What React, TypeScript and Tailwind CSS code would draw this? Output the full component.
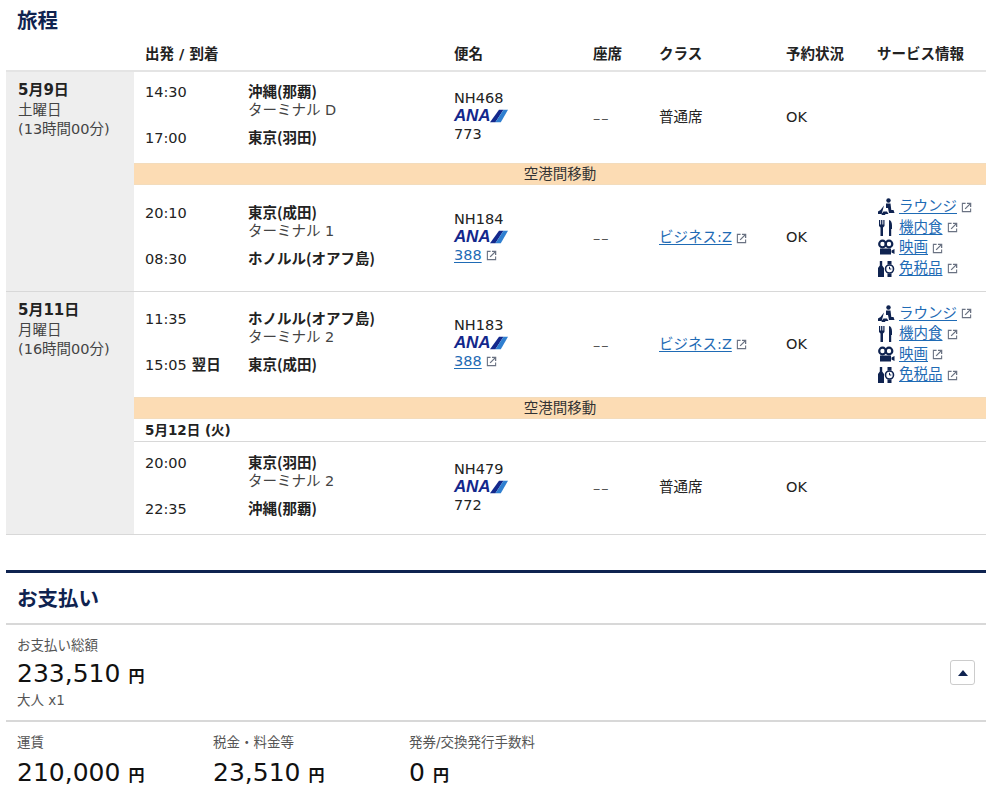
import type { ReactNode } from 'react';

const font = "font-['DejaVu_Sans','Noto_Sans_CJK_JP',sans-serif]";
const place = "-mt-[2px] font-['Noto_Sans_CJK_JP',sans-serif] font-bold";

function ExtIcon({ flush }: { flush?: boolean }) {
  return (
    <svg viewBox="0 0 12 12" className={`${flush ? '' : 'ml-[4px]'} inline-block h-[11px] w-[11px] shrink-0 text-gray-500`} fill="none" stroke="currentColor">
      <path d="M5 1.500H1.500v9h9V7" strokeWidth="1.200" />
      <path d="M4.500 7.500 10 2M6.500 1.500h4v4" strokeWidth="1.400" />
    </svg>
  );
}

function AnaLogo() {
  return (
    <span className="flex h-[18px] w-[54px] items-center">
      <span className="font-['Liberation_Sans',sans-serif] text-[17px] leading-[18px] font-bold tracking-[-0.2px] text-[#13288c] italic">ANA</span>
      <svg viewBox="0 0 20 14" className="h-[14px] w-[18px] shrink-0">
        <polygon points="0,14 10,0 15,0 6,14" fill="#13288c" />
        <polygon points="6,14 15,0 20,0 12,14" fill="#2f7fd0" />
      </svg>
    </span>
  );
}

function LinkText({ children }: { children: ReactNode }) {
  return <span className="text-[#1f6bb5] underline underline-offset-2">{children}</span>;
}

function ServiceIcon({ kind }: { kind: string }) {
  const cls = 'h-[18px] w-[18px] shrink-0 text-[#0f2350]';
  if (kind === 'lounge') {
    return (
      <svg viewBox="0 0 18 18" className={cls} fill="currentColor">
        <circle cx="11.500" cy="2.500" r="2.200" />
        <path d="M9 5.500h4.500l.8 6.500h2.200l1 3h-5.500l-1-5H9z" />
        <path d="M7 7.500 3.500 12 1 13.500V16h3.500l2-2.500H10l1.500 2.500h-3L8 17H5l-.5-.5z" />
      </svg>
    );
  }
  if (kind === 'meal') {
    return (
      <svg viewBox="0 0 18 18" className={cls} fill="currentColor">
        <path d="M2 1h1.200v4.500h.9V1h1.300v4.500h.9V1H7.500v6L6 8.500V17H3.500V8.500L2 7z" />
        <path d="M12 1c2 .3 3 2.500 3 5.500V10h-.8v7H12z" />
      </svg>
    );
  }
  if (kind === 'movie') {
    return (
      <svg viewBox="0 0 18 18" className={cls}>
        <circle cx="5.500" cy="5" r="3.300" fill="none" stroke="currentColor" strokeWidth="2.200" />
        <circle cx="12" cy="5" r="3.300" fill="none" stroke="currentColor" strokeWidth="2.200" />
        <path d="M3 9.500h11v6H3zM14.500 11.500l3-1.500v5l-3-1.500z" fill="currentColor" />
      </svg>
    );
  }
  return (
    <svg viewBox="0 0 18 18" className={cls}>
      <path d="M2.800 1h2.400v4.500L7 8v9H1V8l1.800-2.500z" fill="currentColor" />
      <path d="M10.500 1h4v3.500h-4zM10.500 13.500h4V17h-4z" fill="currentColor" />
      <circle cx="12.500" cy="9" r="4" fill="white" stroke="currentColor" strokeWidth="1.600" />
      <path d="M12.500 6.800V9h1.800" fill="none" stroke="currentColor" strokeWidth="1" />
    </svg>
  );
}

function Services() {
  const rows = [
    ['lounge', 'ラウンジ'],
    ['meal', '機内食'],
    ['movie', '映画'],
    ['duty', '免税品'],
  ];
  return (
    <div className="flex flex-col">
      {rows.map(([kind, label]) => (
        <div key={kind} className="flex h-[20.500px] items-center gap-[4px]">
          <ServiceIcon kind={kind} />
          <LinkText>{label}</LinkText>
          <ExtIcon flush />
        </div>
      ))}
    </div>
  );
}

interface Segment {
  dep: string;
  nextDay?: boolean;
  depPlace: string;
  terminal: string;
  arr: string;
  arrPlace: string;
  flight: string;
  craft: string;
  craftLink?: boolean;
  cabin: string;
  cabinLink?: boolean;
  services?: boolean;
  height: string;
}

function SegmentRow({ s }: { s: Segment }) {
  return (
    <div className={`grid grid-cols-[103px_206px_139px_66px_127px_91px_1fr] items-center pl-[11px] ${s.height}`}>
      <div className="col-span-2 grid grid-cols-[103px_206px] gap-y-[9px] pb-[4px]">
        <div className="leading-[19px]">{s.dep}</div>
        <div className="leading-[19px]">
          <div className={`mb-[1px] ${place}`}>{s.depPlace}</div>
          <div className="text-[#444]">{s.terminal}</div>
        </div>
        <div className="leading-[19px]">
          {s.arr}
          {s.nextDay && <span className="ml-[5px] font-bold">翌日</span>}
        </div>
        <div className={`leading-[19px] ${place}`}>{s.arrPlace}</div>
      </div>
      <div className="flex flex-col pb-[2px] leading-[19px]">
        <div className="h-[18px]">{s.flight}</div>
        <AnaLogo />
        <div className="flex h-[19px] items-center">
          {s.craftLink ? <LinkText>{s.craft}</LinkText> : s.craft}
          {s.craftLink && <ExtIcon />}
        </div>
      </div>
      <div className="pt-[2px] tracking-[1px] text-[#555]">––</div>
      <div className="flex items-center">
        {s.cabinLink ? <LinkText>{s.cabin}</LinkText> : s.cabin}
        {s.cabinLink && <ExtIcon />}
      </div>
      <div>OK</div>
      <div>{s.services && <Services />}</div>
    </div>
  );
}

function Transfer() {
  return <div className="flex h-[22px] items-center justify-center border-y border-[#f3dcbc] bg-[#fcdcb4] leading-none text-[#333]">空港間移動</div>;
}

function DayLabel({ date, day, time }: { date: string; day: string; time: string }) {
  return (
    <div className="w-[128px] shrink-0 bg-[#eeeeee] pt-[9px] pl-[12px] leading-[19.500px]">
      <div className="text-[15px] font-bold">{date}</div>
      <div className="text-[#444]">{day}</div>
      <div className="text-[#444]">{time}</div>
    </div>
  );
}

function Money({ value }: { value: string }) {
  return (
    <div className="flex items-baseline text-[25px] leading-[32px] text-[#111]">
      {value}
      <span className="ml-[8px] text-[16px] font-bold">円</span>
    </div>
  );
}

function Fee({ label, value, className }: { label: string; value: string; className: string }) {
  return (
    <div className={className}>
      <div className="text-[13.500px] leading-[18px] text-[#555]">{label}</div>
      <div className="mt-[6px]">
        <Money value={value} />
      </div>
    </div>
  );
}

const heads = ['便名', '座席', 'クラス', '予約状況', 'サービス情報'];

export default function App() {
  return (
    <div className={`${font} h-[797px] w-[1001px] overflow-hidden bg-white pl-[6px] text-[14.500px] text-[#222]`}>
      <div className="w-[980px]">
        <h2 className="h-[40px] pt-[7px] pl-[11px] text-[20.500px] leading-[28px] font-bold text-[#0f2350]">旅程</h2>
        <div className="grid h-[32px] grid-cols-[139px_309px_139px_66px_127px_91px_1fr] items-center border-b-2 border-[#e4e4e4] pb-[1px] font-bold">
          <div />
          <div>出発 / 到着</div>
          {heads.map((h) => (
            <div key={h}>{h}</div>
          ))}
        </div>

        <div className="flex border-b border-[#d8d8d8]">
          <DayLabel date="5月9日" day="土曜日" time="(13時間00分)" />
          <div className="flex-1">
            <SegmentRow s={{ dep: '14:30', depPlace: '沖縄(那覇)', terminal: 'ターミナル D', arr: '17:00', arrPlace: '東京(羽田)', flight: 'NH468', craft: '773', cabin: '普通席', height: 'h-[91px]' }} />
            <Transfer />
            <SegmentRow s={{ dep: '20:10', depPlace: '東京(成田)', terminal: 'ターミナル 1', arr: '08:30', arrPlace: 'ホノルル(オアフ島)', flight: 'NH184', craft: '388', craftLink: true, cabin: 'ビジネス:Z', cabinLink: true, services: true, height: 'h-[106px]' }} />
          </div>
        </div>

        <div className="flex border-b border-[#d8d8d8]">
          <DayLabel date="5月11日" day="月曜日" time="(16時間00分)" />
          <div className="flex-1">
            <SegmentRow s={{ dep: '11:35', depPlace: 'ホノルル(オアフ島)', terminal: 'ターミナル 2', arr: '15:05', nextDay: true, arrPlace: '東京(成田)', flight: 'NH183', craft: '388', craftLink: true, cabin: 'ビジネス:Z', cabinLink: true, services: true, height: 'h-[105px]' }} />
            <Transfer />
            <div className="flex h-[23px] items-center border-b border-[#d8d8d8] pl-[11px] text-[13.500px] font-bold">5月12日 (火)</div>
            <SegmentRow s={{ dep: '20:00', depPlace: '東京(羽田)', terminal: 'ターミナル 2', arr: '22:35', arrPlace: '沖縄(那覇)', flight: 'NH479', craft: '772', cabin: '普通席', height: 'h-[92px]' }} />
          </div>
        </div>

        <div className="mt-[35px] border-t-[3px] border-[#0f2350]">
          <h2 className="flex h-[52px] items-center border-b-2 border-[#d8d8d8] pt-[2px] pl-[11px] text-[20.500px] font-bold text-[#0f2350]">お支払い</h2>
          <div className="relative h-[97px] border-b-2 border-[#d8d8d8] pt-[11px] pl-[11px]">
            <div className="text-[13.500px] leading-[18px] text-[#555]">お支払い総額</div>
            <div className="mt-[4px]">
              <Money value="233,510" />
            </div>
            <div className="text-[13.500px] leading-[15px] text-[#555]">大人 x1</div>
            <button className="absolute top-[35px] right-[11px] flex h-[25px] w-[25px] items-center justify-center rounded-[3px] border border-[#cccccc] bg-white">
              <svg viewBox="0 0 10 6" className="h-[6px] w-[10px] text-[#0f2350]" fill="currentColor">
                <polygon points="5,0 10,6 0,6" />
              </svg>
            </button>
          </div>
          <div className="flex pt-[11px] pl-[11px]">
            <Fee label="運賃" value="210,000" className="w-[196px]" />
            <Fee label="税金・料金等" value="23,510" className="w-[196px]" />
            <Fee label="発券/交換発行手数料" value="0" className="w-[196px]" />
          </div>
        </div>
      </div>
    </div>
  );
}
